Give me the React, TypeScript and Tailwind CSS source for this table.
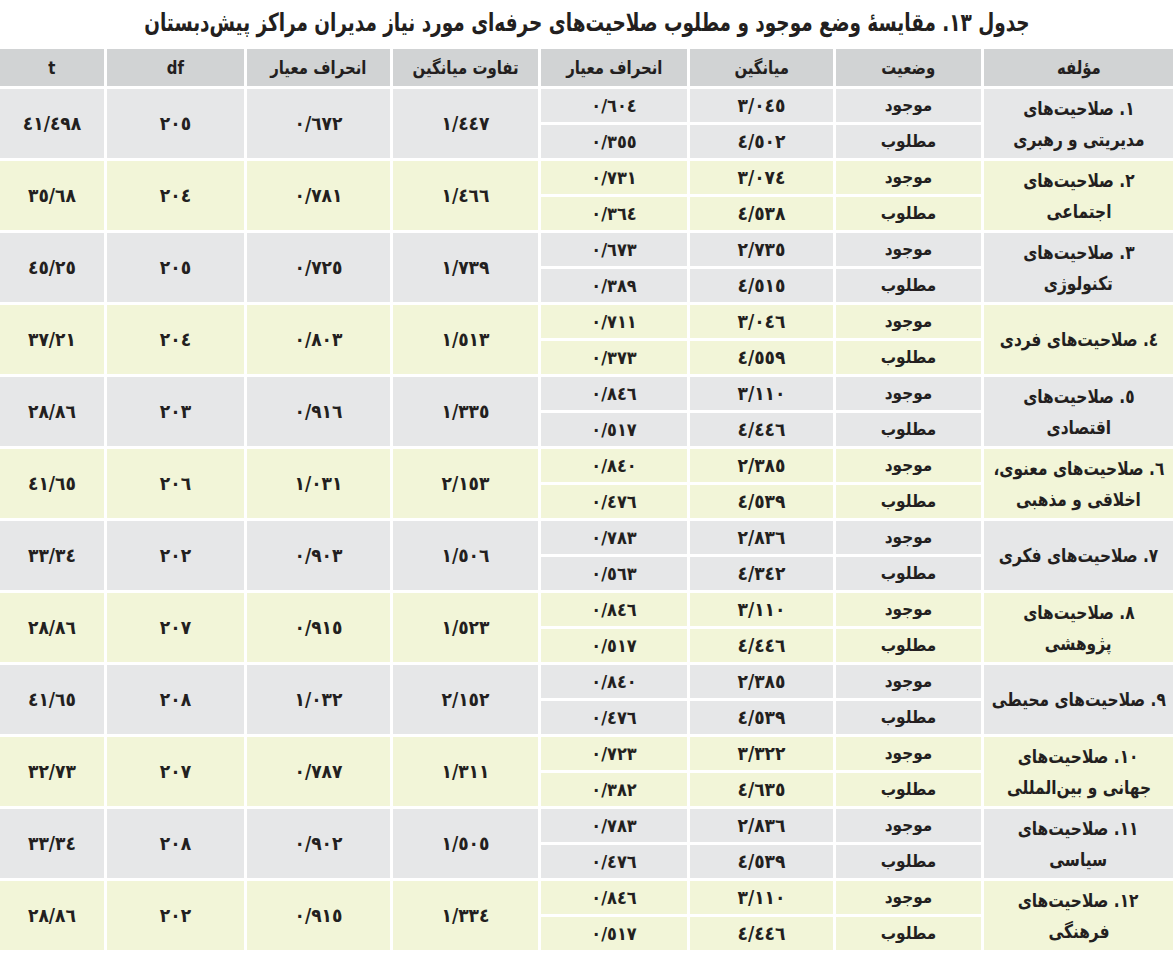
import React from "react";

const toFa = (s: string) => s.replace(/[0-9]/g, (d) => String.fromCharCode(0x0660 + Number(d)));

type Row = {
  name: [string, string?];
  mean: [string, string];
  sd: [string, string];
  diff: string;
  sd2: string;
  df: string;
  t: string;
};

const rows: Row[] = [
  { name: ["1. صلاحیت‌های", "مدیریتی و رهبری"], mean: ["3/045", "4/502"], sd: ["0/604", "0/355"], diff: "1/447", sd2: "0/672", df: "205", t: "41/498" },
  { name: ["2. صلاحیت‌های", "اجتماعی"], mean: ["3/074", "4/538"], sd: ["0/731", "0/364"], diff: "1/466", sd2: "0/781", df: "204", t: "35/68" },
  { name: ["3. صلاحیت‌های", "تکنولوژی"], mean: ["2/735", "4/515"], sd: ["0/673", "0/389"], diff: "1/739", sd2: "0/725", df: "205", t: "45/25" },
  { name: ["4. صلاحیت‌های فردی"], mean: ["3/046", "4/559"], sd: ["0/711", "0/373"], diff: "1/513", sd2: "0/803", df: "204", t: "37/21" },
  { name: ["5. صلاحیت‌های", "اقتصادی"], mean: ["3/110", "4/446"], sd: ["0/846", "0/517"], diff: "1/335", sd2: "0/916", df: "203", t: "28/86" },
  { name: ["6. صلاحیت‌های معنوی،", "اخلاقی و مذهبی"], mean: ["2/385", "4/539"], sd: ["0/840", "0/476"], diff: "2/153", sd2: "1/031", df: "206", t: "41/65" },
  { name: ["7. صلاحیت‌های فکری"], mean: ["2/836", "4/342"], sd: ["0/783", "0/563"], diff: "1/506", sd2: "0/903", df: "202", t: "33/34" },
  { name: ["8. صلاحیت‌های", "پژوهشی"], mean: ["3/110", "4/446"], sd: ["0/846", "0/517"], diff: "1/523", sd2: "0/915", df: "207", t: "28/86" },
  { name: ["9. صلاحیت‌های محیطی"], mean: ["2/385", "4/539"], sd: ["0/840", "0/476"], diff: "2/152", sd2: "1/032", df: "208", t: "41/65" },
  { name: ["10. صلاحیت‌های", "جهانی و بین‌المللی"], mean: ["3/322", "4/635"], sd: ["0/723", "0/382"], diff: "1/311", sd2: "0/787", df: "207", t: "32/73" },
  { name: ["11. صلاحیت‌های", "سیاسی"], mean: ["2/836", "4/539"], sd: ["0/783", "0/476"], diff: "1/505", sd2: "0/902", df: "208", t: "33/34" },
  { name: ["12. صلاحیت‌های", "فرهنگی"], mean: ["3/110", "4/446"], sd: ["0/846", "0/517"], diff: "1/334", sd2: "0/915", df: "202", t: "28/86" },
];

const headers = ["مؤلفه", "وضعیت", "میانگین", "انحراف معیار", "تفاوت میانگین", "انحراف معیار", "df", "t"];

const gridCols = "grid grid-cols-[189px_145px_143px_146px_145px_143px_137px_104px] gap-x-[3px]";

function Split({ a, b, bg, cls }: { a: string; b: string; bg: string; cls: string }) {
  return (
    <div className={`flex flex-col gap-[3px] ${cls}`}>
      <div className={`flex-1 flex items-center justify-center ${bg}`}>{a}</div>
      <div className={`flex-1 flex items-center justify-center ${bg}`}>{b}</div>
    </div>
  );
}

export default function App() {
  return (
    <div
      dir="rtl"
      className="w-[1173px] h-[964px] bg-white text-[#231f20] overflow-hidden"
      style={{ fontFamily: '"DejaVu Sans Condensed", "DejaVu Sans", sans-serif' }}
    >
      <div className="h-[46px] flex items-center justify-center">
        <div className="text-[25px] font-bold tracking-[-0.5px] scale-x-[0.82] whitespace-nowrap">
          {toFa("جدول 13. مقایسهٔ وضع موجود و مطلوب صلاحیت‌های حرفه‌ای مورد نیاز مدیران مراکز پیش‌دبستان")}
        </div>
      </div>
      <div className="flex flex-col gap-[3px] pt-[3px]">
        <div className={`${gridCols} h-[37px]`}>
          {headers.map((h, i) => (
            <div key={i} className="bg-[#d1d3d4] flex items-center justify-center text-[18px] font-bold">
              <span className="scale-x-[0.92] whitespace-nowrap">{h}</span>
            </div>
          ))}
        </div>
        {rows.map((r, i) => {
          const bg = i % 2 === 0 ? "bg-[#e6e7e8]" : "bg-[#f2f5d8]";
          return (
            <div key={i} className={`${gridCols} h-[69px] font-bold`}>
              <div className={`${bg} flex flex-col items-center justify-center text-[19px] leading-[31px]`}>
                <div className="scale-x-[0.9] whitespace-nowrap">{toFa(r.name[0])}</div>
                {r.name[1] && <div className="scale-x-[0.9] whitespace-nowrap">{r.name[1]}</div>}
              </div>
              <Split a="موجود" b="مطلوب" bg={bg} cls="text-[17px]" />
              <Split a={toFa(r.mean[0])} b={toFa(r.mean[1])} bg={bg} cls="text-[19px]" />
              <Split a={toFa(r.sd[0])} b={toFa(r.sd[1])} bg={bg} cls="text-[18px]" />
              <div className={`${bg} flex items-center justify-center text-[19px]`}>{toFa(r.diff)}</div>
              <div className={`${bg} flex items-center justify-center text-[19px]`}>{toFa(r.sd2)}</div>
              <div className={`${bg} flex items-center justify-center text-[19px]`}>{toFa(r.df)}</div>
              <div className={`${bg} flex items-center justify-center text-[19px]`}>{toFa(r.t)}</div>
            </div>
          );
        })}
      </div>
    </div>
  );
}
